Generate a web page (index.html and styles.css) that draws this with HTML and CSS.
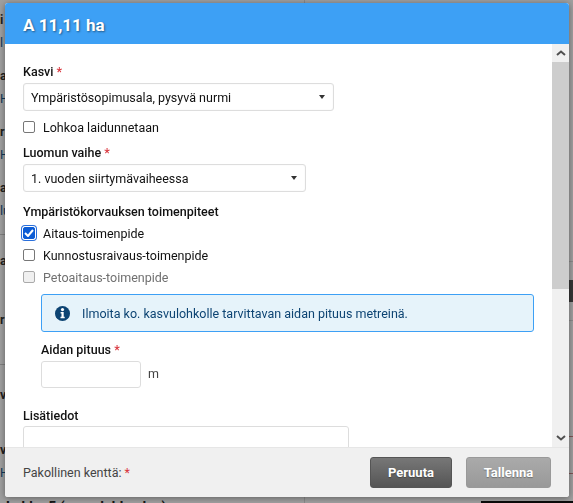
FILE: index.html
```html
<!DOCTYPE html>
<html lang="en">
<head>
    <meta charset="UTF-8">
    <meta name="viewport" content="width=device-width, initial-scale=1.0">
    <title>A 11,11 ha</title>
    <link rel="stylesheet" href="styles.css">
</head>
<body>

    <div class="page">
        <div class="page-rows">
            <div class="page-row"><b>i</b><span>l</span></div>
            <div class="page-row"><b>a</b><span>H</span></div>
            <div class="page-row"><b>r</b><span>H</span></div>
            <div class="page-row page-row-line"><b>a</b><span>lu</span></div>
            <div class="page-row page-row-gap"><b>a</b></div>
            <div class="page-row page-row-line page-row-tall"><b>r</b></div>
            <div class="page-row page-row-short"><b>v</b></div>
            <div class="page-row"><b>v</b><span>H</span></div>
            <div class="page-bottom">Lohko 5 (peruslohkoalue)</div>
        </div>
        <div class="page-side">
            <div class="side-cell side-line"></div>
            <div class="side-cell side-dark"></div>
            <div class="side-cell side-line-end"></div>
            <div class="side-cell side-red"></div>
        </div>
        <div class="page-vline"></div>
        <div class="page-bar"></div>
    </div>

    <div class="overlay">
        <div class="dialog">
            <div class="dialog-header">A 11,11 ha</div>

            <div class="dialog-main">
                <div class="dialog-body">
                    <label class="field-label">Kasvi <span class="req">*</span></label>
                    <div class="select select-wide">
                        <span>Ympäristösopimusala, pysyvä nurmi</span>
                        <svg width="6" height="4" viewBox="0 0 6 4"><path d="M0 0h6L3 4z" fill="#333"/></svg>
                    </div>

                    <div class="check check-first">
                        <span class="box"></span>
                        <span>Lohkoa laidunnetaan</span>
                    </div>

                    <label class="field-label label-luomu">Luomun vaihe <span class="req">*</span></label>
                    <div class="select select-mid">
                        <span>1. vuoden siirtymävaiheessa</span>
                        <svg width="6" height="4" viewBox="0 0 6 4"><path d="M0 0h6L3 4z" fill="#333"/></svg>
                    </div>

                    <div class="field-label label-toimet">Ympäristökorvauksen toimenpiteet</div>
                    <div class="check">
                        <span class="box box-checked">
                            <svg width="10" height="8" viewBox="0 0 10 8"><path d="M1 4l3 3 5-6" fill="none" stroke="#fff" stroke-width="2"/></svg>
                        </span>
                        <span>Aitaus-toimenpide</span>
                    </div>
                    <div class="check">
                        <span class="box"></span>
                        <span>Kunnostusraivaus-toimenpide</span>
                    </div>
                    <div class="check check-disabled">
                        <span class="box"></span>
                        <span>Petoaitaus-toimenpide</span>
                    </div>

                    <div class="nested">
                        <div class="alert">
                            <svg class="alert-icon" width="15" height="15" viewBox="0 0 15 15">
                                <circle cx="7.5" cy="7.5" r="7.5" fill="#0d4473"/>
                                <circle cx="7.5" cy="3.6" r="1.6" fill="#fff"/>
                                <path d="M5.6 6.1h3.1v4.7h1v1.5H5.5v-1.5h1V7.6h-.9z" fill="#fff"/>
                            </svg>
                            <span>Ilmoita ko. kasvulohkolle tarvittavan aidan pituus metreinä.</span>
                        </div>
                        <label class="field-label label-aita">Aidan pituus <span class="req">*</span></label>
                        <div class="input-row">
                            <input class="input-small" type="text">
                            <span class="unit">m</span>
                        </div>
                    </div>

                    <label class="field-label label-lisa">Lisätiedot</label>
                    <div class="textarea"></div>
                </div>

                <div class="scrollbar">
                    <div class="scroll-btn">
                        <svg width="10" height="6" viewBox="0 0 10 6"><path d="M1 5l4-3.500 4 3.500" fill="none" stroke="#505050" stroke-width="2"/></svg>
                    </div>
                    <div class="scroll-track"><div class="scroll-thumb"></div></div>
                    <div class="scroll-btn">
                        <svg width="10" height="6" viewBox="0 0 10 6"><path d="M1 1l4 3.500 4-3.500" fill="none" stroke="#505050" stroke-width="2"/></svg>
                    </div>
                </div>
            </div>

            <div class="dialog-footer">
                <div class="required-note">Pakollinen kenttä: <span class="req">*</span></div>
                <button class="btn btn-cancel">Peruuta</button>
                <button class="btn btn-save">Tallenna</button>
            </div>
        </div>
    </div>

</body>
</html>
```

FILE: styles.css
```css
html, body {
    margin: 0;
    height: 100%;
    overflow: hidden;
}
body {
    font-family: Roboto, "Liberation Sans", sans-serif;
    font-size: 12.5px;
    color: #111;
    background-color: #fff;
}

/* Page behind the dialog */
.page {
    display: flex;
    justify-content: space-between;
    height: 503px;
    position: relative;
}
.page-rows {
    width: 100%;
    padding-top: 10px;
}
.page-row {
    height: 56px;
    box-sizing: border-box;
    line-height: 20px;
}
.page-row b, .page-row span {
    display: block;
    color: #333;
}
.page-row span {
    margin-top: 3px;
    color: #1a5a8c;
}
.page-row-line {
    border-bottom: 1px solid #ccc;
    height: 57px;
}
.page-row-gap {
    height: 58px;
    padding-top: 16px;
}
.page-row-tall {
    height: 72px;
    padding-top: 17px;
}
.page-row-short {
    height: 75px;
    padding-top: 20px;
}
.page-bottom {
    margin-top: 3px;
    padding-left: 6px;
    font-size: 14px;
    font-weight: bold;
    color: #222;
}
.page-side {
    width: 4px;
    flex-shrink: 0;
    padding-top: 261px;
}
.side-line {
    height: 19px;
    border-top: 1px solid #ddd;
    box-sizing: border-box;
}
.side-dark {
    height: 22px;
    background-color: #555;
}
.side-line-end {
    height: 19px;
    border-bottom: 1px solid #ddd;
    box-sizing: border-box;
}
.side-red {
    height: 36px;
    margin-top: 115px;
    border-top: 1px solid #c88;
    border-bottom: 1px solid #c88;
}
.page-vline {
    position: absolute;
    left: 304px;
    top: 0;
    bottom: 0;
    width: 1px;
    background-color: #ddd;
}
.page-bar {
    position: absolute;
    left: 481px;
    right: 0;
    bottom: 0;
    height: 2px;
    background-color: #111;
}

/* Dialog */
.overlay {
    position: fixed;
    top: 0;
    left: 0;
    right: 0;
    bottom: 0;
    background-color: rgba(0, 0, 0, 0.38);
}
.dialog {
    position: absolute;
    left: 5px;
    top: 3px;
    width: 564px;
    height: 494px;
    display: flex;
    flex-direction: column;
    background-color: #fff;
    border-radius: 3px;
    overflow: hidden;
    box-shadow: 0 1px 6px rgba(0, 0, 0, 0.4);
}
.dialog-header {
    height: 41px;
    flex-shrink: 0;
    box-sizing: border-box;
    padding-left: 18px;
    line-height: 44px;
    background-color: #3da0f5;
    color: #fff;
    font-size: 17px;
    font-weight: bold;
    text-shadow: 1px 1px 2px rgba(0, 0, 0, 0.45);
}
.dialog-main {
    flex: 1;
    display: flex;
    min-height: 0;
}
.dialog-body {
    flex: 1;
    overflow: hidden;
    padding: 20px 0 0 18px;
}

.field-label {
    display: block;
    font-weight: 500;
    line-height: 16px;
}
.req {
    color: #d9363e;
}
.select {
    display: flex;
    justify-content: space-between;
    align-items: center;
    box-sizing: border-box;
    height: 28px;
    margin-top: 3px;
    padding: 0 8px 0 7px;
    background-color: #fff;
    border: 1px solid #ddd;
    border-radius: 3px;
    box-shadow: inset 0 0 1px #ddd;
}
.select-wide {
    width: 311px;
}
.select-mid {
    width: 283px;
}
.check {
    display: flex;
    align-items: center;
    gap: 8px;
    height: 22px;
}
.check-first {
    margin-top: 5px;
}
.check-disabled {
    color: #707070;
}
.box {
    display: flex;
    align-items: center;
    justify-content: center;
    box-sizing: border-box;
    width: 12px;
    height: 12px;
    background-color: #fff;
    border: 1px solid #777;
    border-radius: 2px;
}
.check-disabled .box {
    background-color: #f0f0f0;
    border-color: #aaa;
}
.box-checked {
    background-color: #0b5cd5;
    border-color: #0b5cd5;
    box-shadow: 0 0 0 1px #fff, 0 0 0 2px #2a6fdb;
}
.label-luomu {
    margin-top: 7px;
}
.label-toimet {
    margin-top: 12px;
    margin-bottom: 2px;
}
.nested {
    padding-left: 18px;
    margin-top: 6px;
}
.alert {
    display: flex;
    align-items: center;
    gap: 12px;
    box-sizing: border-box;
    width: 493px;
    height: 38px;
    padding-left: 13px;
    background-color: #e6f3fa;
    border: 1px solid #3da0f5;
    border-radius: 3px;
    color: #0d4473;
}
.alert-icon {
    flex-shrink: 0;
}
.label-aita {
    margin-top: 10px;
}
.input-row {
    display: flex;
    align-items: center;
    gap: 7px;
    margin-top: 3px;
    color: #444;
}
.unit {
    margin-bottom: 2px;
}
.input-small {
    box-sizing: border-box;
    width: 100px;
    height: 27px;
    border: 1px solid #ddd;
    border-radius: 3px;
}
.label-lisa {
    margin-top: 20px;
}
.textarea {
    box-sizing: border-box;
    width: 326px;
    height: 60px;
    margin-top: 2px;
    border: 1px solid #ddd;
    border-radius: 3px;
}

/* Scrollbar */
.scrollbar {
    width: 17px;
    flex-shrink: 0;
    display: flex;
    flex-direction: column;
    background-color: #f0f0f0;
}
.scroll-btn {
    height: 18px;
    flex-shrink: 0;
    display: flex;
    align-items: center;
    justify-content: center;
}
.scroll-track {
    flex: 1;
}
.scroll-thumb {
    height: 227px;
    background-color: #cdcdcd;
}

/* Footer */
.dialog-footer {
    height: 50px;
    flex-shrink: 0;
    box-sizing: border-box;
    display: flex;
    align-items: center;
    padding: 0 18px;
    background-color: #f0f0f0;
    border-top: 1px solid #e6e6e6;
    gap: 14px;
}
.required-note {
    flex: 1;
    color: #444;
}
.btn {
    height: 31px;
    border-radius: 3px;
    color: #fff;
    font-family: inherit;
    font-size: 13px;
    font-weight: bold;
    text-shadow: 0 1px 1px rgba(0, 0, 0, 0.3);
}
.btn-cancel {
    width: 82px;
    background: linear-gradient(#777, #555);
    border: 1px solid #555;
}
.btn-save {
    width: 85px;
    background: linear-gradient(#aaa, #999);
    border: 1px solid #999;
}
```
